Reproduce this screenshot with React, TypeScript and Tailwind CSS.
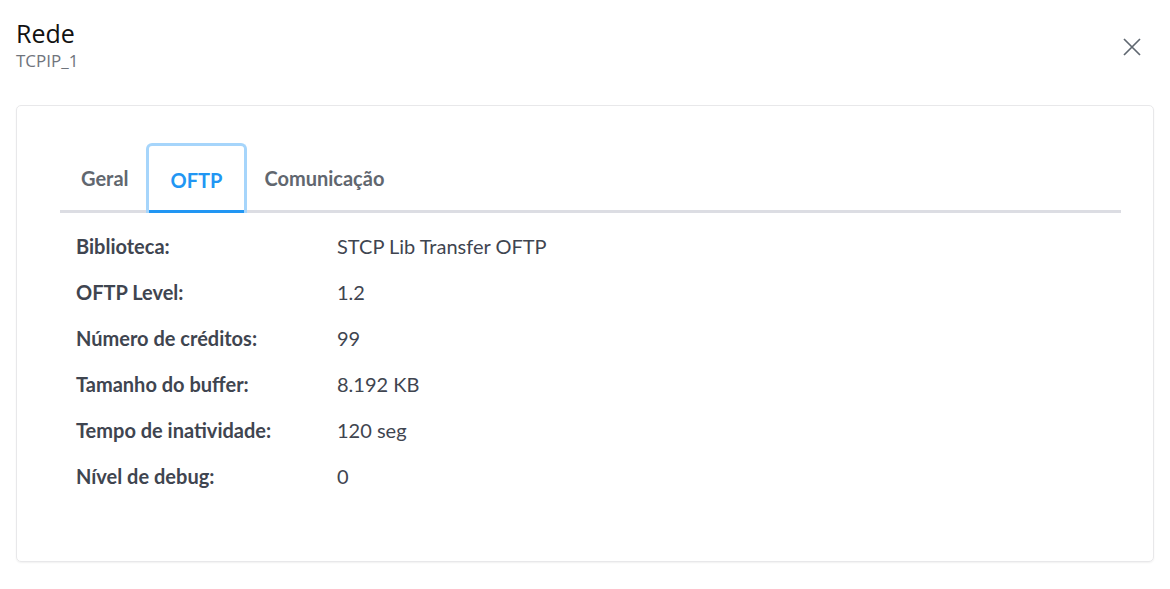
import React, { useState } from "react";

const rows: [string, string][] = [
  ["Biblioteca:", "STCP Lib Transfer OFTP"],
  ["OFTP Level:", "1.2"],
  ["Número de créditos:", "99"],
  ["Tamanho do buffer:", "8.192 KB"],
  ["Tempo de inatividade:", "120 seg"],
  ["Nível de debug:", "0"],
];

const tabs = ["Geral", "OFTP", "Comunicação"];

export default function App() {
  const [active, setActive] = useState("OFTP");

  return (
    <div className="min-h-[589px] w-[1170px] bg-white font-['Lato',sans-serif]">
      {/* cabeçalho */}
      <div className="flex items-start justify-between px-4 pt-[16px]">
        <div className="font-['Open_Sans',sans-serif]">
          <h1 className="text-[25px] leading-[34px] text-[#111]">Rede</h1>
          <p className="text-[17px] leading-[22px] text-[#6f747c]">TCPIP_1</p>
        </div>
        <button className="mr-[13px] mt-[22px] text-[#5f6770]">
          <svg width="18" height="18" viewBox="0 0 18 18" fill="none">
            <path d="M1 1L17 17M17 1L1 17" stroke="currentColor" strokeWidth="1.7" />
          </svg>
        </button>
      </div>

      {/* cartão */}
      <div className="mx-4 mt-[33px] h-[457px] rounded-[5px] border border-[#e8e8ea] shadow-[0_1px_2px_rgba(0,0,0,0.06)] pl-[43px] pr-[32px] pt-[37px]">
        <div className="flex border-b-[3px] border-[#dcdde3] pl-[4px]">
          {tabs.map((t) => {
            const on = t === active;
            return (
              <button
                key={t}
                onClick={() => setActive(t)}
                className={
                  on
                    ? "relative -mb-[3px] h-[70px] rounded-t-[6px] border-[3px] border-b-0 border-[#a6d5fb] px-[22px] pt-0 text-[20px] font-bold text-[#2196f3]"
                    : "h-[67px] px-[17px] pt-[3px] text-[20px] font-bold text-[#61676f]"
                }
              >
                {t}
                {on && (
                  <span className="absolute bottom-0 left-0 right-0 h-[3px] bg-[#2196f3]" />
                )}
              </button>
            );
          })}
        </div>

        <div className="mt-[20px] flex flex-col gap-[20px] pl-4">
          {rows.map(([k, v]) => (
            <div key={k} className="flex text-[20px] leading-[26px] text-[#3f4550]">
              <span className="w-[261px] font-bold">{k}</span>
              <span>{v}</span>
            </div>
          ))}
        </div>
      </div>
    </div>
  );
}
